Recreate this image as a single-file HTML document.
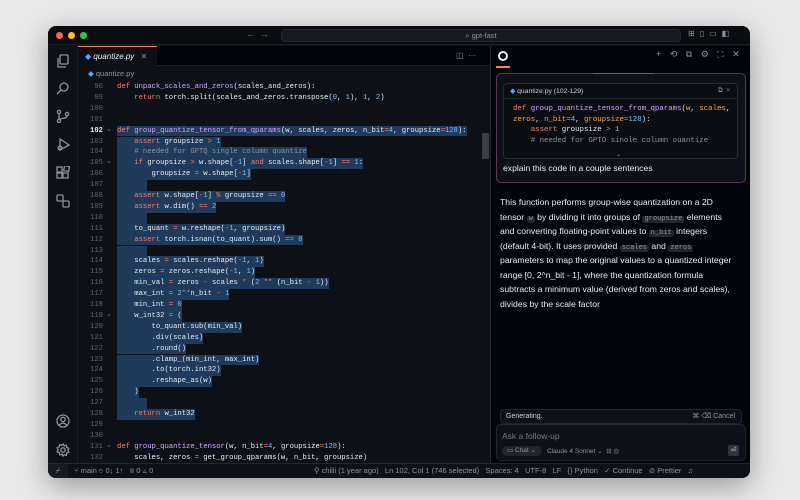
<!DOCTYPE html>
<html><head><meta charset="utf-8"><style>
*{margin:0;padding:0;box-sizing:border-box}
body{width:800px;height:500px;background:#e9e9ea;overflow:hidden;font-family:"Liberation Sans",sans-serif;position:relative}
.win{position:absolute;left:48px;top:26px;width:702px;height:452px;background:#0d1117;border-radius:8px;overflow:hidden;box-shadow:0 8px 28px rgba(0,0,0,.35)}
.abs{position:absolute}
.mono{font-family:"Liberation Mono",monospace}
.ln{position:absolute;left:30px;width:25px;text-align:right;font-family:"Liberation Mono",monospace;font-size:7.2px;color:#5c6370}
.cl{position:absolute;left:69px;font-family:"Liberation Mono",monospace;font-size:7.2px;color:#e6edf3;white-space:pre;height:10.9px;line-height:10.9px}
.sel{background:#1f3a5a}
.k{color:#ff7b72}.f{color:#d2a8ff}.n{color:#79c0ff}.c{color:#8b949e}.o{color:#ff7b72}
.ic{position:absolute;stroke:#8b949e;fill:none;stroke-width:1.3}
.sb{position:absolute;top:437px;height:15px;left:0;right:0;background:#0d1117;border-top:1px solid #21262d;font-size:7.5px;color:#8b949e;line-height:14px}
.sb span{position:absolute}
.chip{font-family:"Liberation Mono",monospace;background:#21262d;color:#8b949e;padding:0 2px;border-radius:2px;font-size:7px;line-height:1;display:inline-block}
</style></head><body>
<div class="win">
 <div class="abs" style="left:0;top:0;width:702px;height:19px;background:#0a0c10;border-bottom:1px solid #1a1e24"></div>
 <div class="abs" style="left:8px;top:6px;width:7px;height:7px;border-radius:50%;background:#fe5f57"></div>
 <div class="abs" style="left:20px;top:6px;width:7px;height:7px;border-radius:50%;background:#febc2e"></div>
 <div class="abs" style="left:32px;top:6px;width:7px;height:7px;border-radius:50%;background:#28c840"></div>
 <div class="abs" style="left:198px;top:3px;color:#777;font-size:9px">←&nbsp;&nbsp;→</div>
 <div class="abs" style="left:233px;top:3px;width:400px;height:13px;background:#161a20;border-radius:4px;border:1px solid #22272e;text-align:center;font-size:7.5px;color:#8b949e;line-height:12px">⌕ gpt-fast</div>
 <div class="abs" style="left:640px;top:3px;color:#8b949e;font-size:8px;letter-spacing:5px">⊞▯▭◧</div>
 <div class="abs" style="left:0;top:20px;width:30px;height:417px;background:#0d1117;border-right:1px solid #1a1e24"></div>
 <svg class="ic" style="left:8px;top:28px" width="14" height="14" viewBox="0 0 14 14"><rect x="4" y="1" width="8" height="9" rx="1"/><path d="M2 4v9h8"/></svg>
 <svg class="ic" style="left:8px;top:55px" width="14" height="14" viewBox="0 0 14 14"><circle cx="8" cy="6" r="4"/><path d="M5 9l-4 4"/></svg>
 <svg class="ic" style="left:8px;top:83px" width="14" height="14" viewBox="0 0 14 14"><circle cx="3" cy="3" r="1.6"/><circle cx="3" cy="12" r="1.6"/><circle cx="11" cy="5" r="1.6"/><path d="M3 5v5M11 7c0 3-8 2-8 4"/></svg>
 <svg class="ic" style="left:8px;top:111px" width="14" height="14" viewBox="0 0 14 14"><path d="M4 2l9 6-9 5z"/><circle cx="4" cy="11" r="2"/></svg>
 <svg class="ic" style="left:8px;top:140px" width="14" height="14" viewBox="0 0 14 14"><rect x="1" y="7" width="5" height="5"/><rect x="7" y="7" width="5" height="5"/><rect x="1" y="1" width="5" height="5"/><rect x="8" y="0" width="5" height="5" transform="rotate(10 10 3)"/></svg>
 <svg class="ic" style="left:8px;top:168px" width="14" height="14" viewBox="0 0 14 14"><rect x="1" y="1" width="6" height="6" rx="1"/><rect x="7" y="7" width="6" height="6" rx="1"/></svg>
 <svg class="ic" style="left:8px;top:388px" width="14" height="14" viewBox="0 0 14 14"><circle cx="7" cy="7" r="6"/><circle cx="7" cy="5.5" r="2.2"/><path d="M3 11.5c2-3 6-3 8 0"/></svg>
 <svg class="ic" style="left:8px;top:417px" width="14" height="14" viewBox="0 0 14 14"><circle cx="7" cy="7" r="2.2"/><path d="M7 1l1.2 2 2.2-.8.3 2.3 2.2.8-1 2 1 2-2.2.8-.3 2.3-2.2-.8L7 13l-1.2-2-2.2.8-.3-2.3L1.1 8.7l1-2-1-2 2.2-.8.3-2.3 2.2.8z"/></svg>
 <div class="abs" style="left:30px;top:20px;width:412px;height:20px;background:#010409;border-bottom:1px solid #1a1e24"></div>
 <div class="abs" style="left:30px;top:20px;width:79px;height:21px;background:#0d1117;border-top:1px solid #f78166;font-size:8px;color:#e6edf3;line-height:19px;padding-left:7px"><span style="color:#58a6ff">◆</span> <i>quantize.py</i> <span style="color:#8b949e;margin-left:4px">✕</span></div>
 <div class="abs" style="left:408px;top:25px;color:#8b949e;font-size:8px">◫ &nbsp;···</div>
 <div class="abs" style="left:40px;top:43px;font-size:7.5px;color:#8b949e"><span style="color:#58a6ff">◆</span> quantize.py</div>
 <div id="code"></div>
 <div class="abs" style="left:434px;top:107px;width:7px;height:26px;background:#3a3f46"></div>
 <div class="abs" style="left:442px;top:20px;width:1px;height:417px;background:#21262d"></div>
 <div class="abs" style="left:443px;top:20px;width:259px;height:417px;background:#010409"></div>
 <div class="abs" style="left:450px;top:25px;width:10px;height:10px;border:2.5px solid #e6edf3;border-radius:50%"></div>
 <div class="abs" style="left:448px;top:40px;width:14px;height:1.5px;background:#f78166"></div>
 <div class="abs" style="left:608px;top:23px;color:#8b949e;font-size:9px;letter-spacing:3px">+ ⟲ ⧉ ⚙ ⛶ ✕</div>
 <div class="abs" style="left:448px;top:47px;width:250px;height:110px;border:1px solid #5a3a55;border-radius:5px;background:#0d1117"></div>
 <div class="abs" style="left:545px;top:47px;width:60px;height:1px;background:#4d6b80"></div>
 <div class="abs" style="left:455px;top:57px;width:235px;height:76px;border:1px solid #262c36;border-radius:4px;background:#0a0d12"></div>
 <div class="abs" style="left:462px;top:61px;font-size:6.8px;color:#c9d1d9"><span style="color:#58a6ff">◆</span> quantize.py (102-129)</div>
 <div class="abs" style="left:670px;top:61px;font-size:6.5px;color:#8b949e">⧉ &nbsp;×</div>
 <div class="abs" style="left:455px;top:72px;width:235px;height:1px;background:#1f242c"></div>
 <div class="abs mono" style="left:465px;top:78px;font-size:7.4px;line-height:10.5px;white-space:pre;color:#e6edf3"><span class="k">def</span> <span class="f">group_quantize_tensor_from_qparams</span>(<span style="color:#ffa657">w</span>, <span style="color:#ffa657">scales</span>,
<span style="color:#ffa657">zeros</span>, <span style="color:#ffa657">n_bit</span><span class="o">=</span><span class="n">4</span>, <span style="color:#ffa657">groupsize</span><span class="o">=</span><span class="n">128</span>):
    <span class="k">assert</span> groupsize <span class="o">&gt;</span> <span class="n">1</span>
    <span class="c"># needed for GPTO sinole column ouantize</span></div>
 <div class="abs" style="left:568px;top:125px;font-size:6px;color:#8b949e">⌄</div>
 <div class="abs" style="left:455px;top:137px;font-size:8.6px;color:#e6edf3">explain this code in a couple sentences</div>
 <div class="abs" style="left:452px;top:169px;width:236px;font-size:8.7px;line-height:14.5px;color:#e6edf3">This function performs group-wise quantization on a 2D tensor <span class="chip">w</span> by dividing it into groups of <span class="chip">groupsize</span> elements and converting floating-point values to <span class="chip">n_bit</span> integers (default 4-bit). It uses provided <span class="chip">scales</span> and <span class="chip">zeros</span> parameters to map the original values to a quantized integer range [0, 2^n_bit - 1], where the quantization formula subtracts a minimum value (derived from zeros and scales), divides by the scale factor</div>
 <div class="abs" style="left:452px;top:383px;width:242px;height:15px;border:1px solid #21262d;border-radius:4px;background:#0d1117;font-size:7px;color:#c9d1d9;line-height:13px;padding-left:5px">Generating.<span style="position:absolute;right:6px;color:#8b949e">⌘ ⌫ Cancel</span></div>
 <div class="abs" style="left:448px;top:398px;width:250px;height:37px;border:1px solid #21262d;border-radius:5px;background:#0d1117"></div>
 <div class="abs" style="left:454px;top:405px;font-size:8.5px;color:#6e7681">Ask a follow-up</div>
 <div class="abs" style="left:454px;top:420px;width:40px;height:10px;border-radius:5px;background:#21262d;font-size:6.5px;color:#8b949e;line-height:10px;padding-left:5px">▭ Chat ⌄</div>
 <div class="abs" style="left:499px;top:421px;font-size:6.5px;color:#8b949e">Claude 4 Sonnet ⌄ &nbsp;⊟ ◎</div>
 <div class="abs" style="left:680px;top:419px;width:11px;height:11px;border-radius:2px;background:#30363d;font-size:7px;color:#c9d1d9;text-align:center;line-height:11px">⏎</div>
 <div class="sb">
  <span style="left:0;width:20px;height:14px;background:#161b22;text-align:center">⌿</span>
  <span style="left:26px">⑂ main ⟳ 0↓ 1↑ &nbsp; ⊗ 0 ⚠ 0</span>
  <span style="left:266px">⚲ chilli (1 year ago) &nbsp; Ln 102, Col 1 (746 selected) &nbsp; Spaces: 4 &nbsp; UTF-8 &nbsp; LF &nbsp; {} Python &nbsp; ✓ Continue &nbsp; ⊘ Prettier &nbsp; ♫</span>
 </div>
</div>
<script>
var L=[
[96,'<span class="k">def</span> <span class="f">unpack_scales_and_zeros</span>(scales_and_zeros):',0],
[99,'    <span class="k">return</span> torch.split(scales_and_zeros.transpose(<span class="n">0</span>, <span class="n">1</span>), <span class="n">1</span>, <span class="n">2</span>)',0],
[100,'',0],[101,'',0],
[102,'<span class="k">def</span> <span class="f">group_quantize_tensor_from_qparams</span>(w, scales, zeros, n_bit<span class="o">=</span><span class="n">4</span>, groupsize<span class="o">=</span><span class="n">128</span>):',1],
[103,'    <span class="k">assert</span> groupsize <span class="o">&gt;</span> <span class="n">1</span>',1],
[104,'    <span class="c"># needed for GPTQ single column quantize</span>',1],
[105,'    <span class="k">if</span> groupsize <span class="o">&gt;</span> w.shape[<span class="o">-</span><span class="n">1</span>] <span class="k">and</span> scales.shape[<span class="o">-</span><span class="n">1</span>] <span class="o">==</span> <span class="n">1</span>:',1],
[106,'        groupsize <span class="o">=</span> w.shape[<span class="o">-</span><span class="n">1</span>]',1],
[107,' ',1],
[108,'    <span class="k">assert</span> w.shape[<span class="o">-</span><span class="n">1</span>] <span class="o">%</span> groupsize <span class="o">==</span> <span class="n">0</span>',1],
[109,'    <span class="k">assert</span> w.dim() <span class="o">==</span> <span class="n">2</span>',1],
[110,' ',1],
[111,'    to_quant <span class="o">=</span> w.reshape(<span class="o">-</span><span class="n">1</span>, groupsize)',1],
[112,'    <span class="k">assert</span> torch.isnan(to_quant).sum() <span class="o">==</span> <span class="n">0</span>',1],
[113,' ',1],
[114,'    scales <span class="o">=</span> scales.reshape(<span class="o">-</span><span class="n">1</span>, <span class="n">1</span>)',1],
[115,'    zeros <span class="o">=</span> zeros.reshape(<span class="o">-</span><span class="n">1</span>, <span class="n">1</span>)',1],
[116,'    min_val <span class="o">=</span> zeros <span class="o">-</span> scales <span class="o">*</span> (<span class="n">2</span> <span class="o">**</span> (n_bit <span class="o">-</span> <span class="n">1</span>))',1],
[117,'    max_int <span class="o">=</span> <span class="n">2</span><span class="o">**</span>n_bit <span class="o">-</span> <span class="n">1</span>',1],
[118,'    min_int <span class="o">=</span> <span class="n">0</span>',1],
[119,'    w_int32 <span class="o">=</span> (',1],
[120,'        to_quant.sub(min_val)',1],
[121,'        .div(scales)',1],
[122,'        .round()',1],
[123,'        .clamp_(min_int, max_int)',1],
[124,'        .to(torch.int32)',1],
[125,'        .reshape_as(w)',1],
[126,'    )',1],
[127,' ',1],
[128,'    <span class="k">return</span> w_int32',1],
[129,'',0],[130,'',0],
[131,'<span class="k">def</span> <span class="f">group_quantize_tensor</span>(w, n_bit<span class="o">=</span><span class="n">4</span>, groupsize<span class="o">=</span><span class="n">128</span>):',0],
[132,'    scales, zeros <span class="o">=</span> get_group_qparams(w, n_bit, groupsize)',0]];
var h='';
L.forEach(function(l,i){var y=56+i*10.9;
h+='<div class="ln" style="top:'+(y+1)+'px;'+(l[0]==102?'color:#e6edf3;font-weight:bold':'')+'">'+l[0]+'</div>';
if([102,105,119,131].indexOf(l[0])>=0)h+='<div class="abs" style="left:58px;top:'+(y-1)+'px;font-size:7px;color:#6e7681">⌄</div>';
if(l[1])h+='<div class="cl'+(l[2]?' sel':'')+'" style="top:'+y+'px;'+(l[1]==' '?'width:30px':'')+'">'+l[1]+'</div>';
});
document.getElementById('code').innerHTML=h;
</script>
</body></html>
